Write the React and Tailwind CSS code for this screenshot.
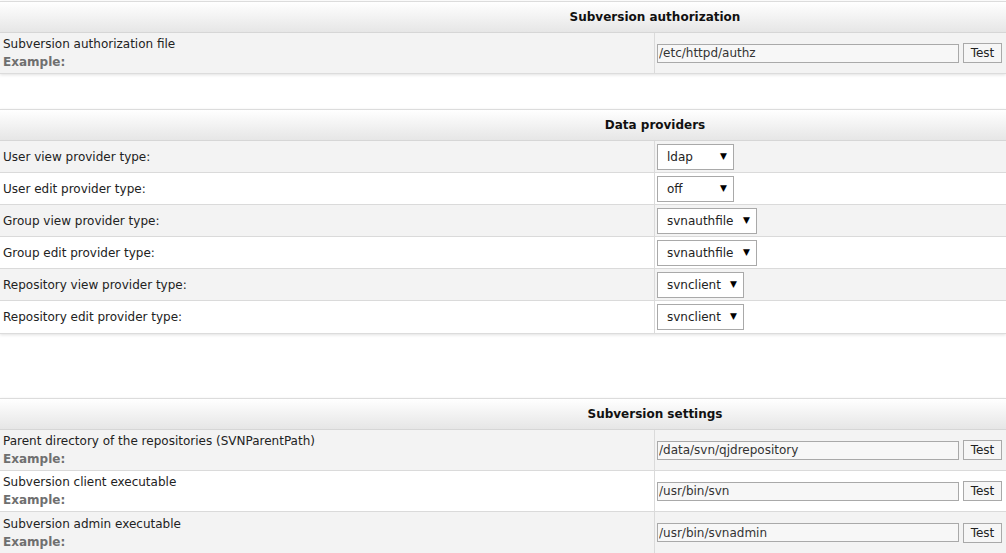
import { useState } from "react";

const font = "font-['Verdana','DejaVu_Sans',sans-serif]";

const Section = ({ title, children }) => (
  <section className="w-[1006px] border-t border-b border-[#dcdcdc] bg-white shadow-[0_1px_3px_rgba(0,0,0,0.12)]">
    <div className="flex h-[31px] items-center justify-center border-b border-[#d6d6d6] bg-gradient-to-b from-[#ffffff] to-[#e6e6e6] pl-[304px] text-[12px] font-bold text-[#111]">
      {title}
    </div>
    {children}
  </section>
);

const Row = ({ shaded, height, left, right, last }) => (
  <div
    className={`grid grid-cols-[654px_1fr] ${height} ${shaded ? "bg-[#f3f3f3]" : "bg-white"} ${
      last ? "" : "border-b border-[#dadada]"
    }`}
  >
    <div className="flex flex-col justify-center pl-[3px] text-[12px] leading-[18px] text-[#222]">{left}</div>
    <div className="flex items-center border-l border-[#dadada] pl-[2px]">{right}</div>
  </div>
);

const Label = ({ text }) => (
  <>
    <span>{text}</span>
    <span className="font-bold text-[#6f6f6f]">Example:</span>
  </>
);

const PathInput = ({ value }) => {
  const [text, setText] = useState(value);
  return (
    <div className="flex items-center gap-[4px]">
      <input
        className="h-[19px] w-[302px] border border-[#a9a9a9] bg-[#f7f7f7] px-[1px] text-[12px] text-[#333] outline-none"
        value={text}
        onChange={(event) => setText(event.target.value)}
      />
      <button className="h-[20px] w-[39px] border border-[#a9a9a9] bg-[#f6f6f6] text-[12px] text-[#222]">Test</button>
    </div>
  );
};

const Select = ({ value, width }) => (
  <div
    className={`flex h-[26px] ${width} items-center justify-between border border-[#a9a9a9] bg-white pl-[9px] pr-[6px] text-[12px] text-[#222]`}
  >
    <span>{value}</span>
    <span className="text-[9px] text-black">▼</span>
  </div>
);

const providers = [
  ["User view provider type:", "ldap", "w-[77px]"],
  ["User edit provider type:", "off", "w-[77px]"],
  ["Group view provider type:", "svnauthfile", "w-[100px]"],
  ["Group edit provider type:", "svnauthfile", "w-[100px]"],
  ["Repository view provider type:", "svnclient", "w-[87px]"],
  ["Repository edit provider type:", "svnclient", "w-[87px]"]
];

const settings = [
  ["Parent directory of the repositories (SVNParentPath)", "/data/svn/qjdrepository"],
  ["Subversion client executable", "/usr/bin/svn"],
  ["Subversion admin executable", "/usr/bin/svnadmin"]
];

export default function App() {
  return (
    <div className={`h-[553px] w-[1006px] overflow-hidden bg-white pt-[1px] ${font}`}>
      <Section title="Subversion authorization">
        <Row
          shaded
          last
          height="h-[40px]"
          left={<Label text="Subversion authorization file" />}
          right={<PathInput value="/etc/httpd/authz" />}
        />
      </Section>

      <div className="h-[35px]" />

      <Section title="Data providers">
        {providers.map(([label, value, width], index) => (
          <Row
            key={label}
            shaded={index % 2 === 0}
            last={index === providers.length - 1}
            height="h-[32px]"
            left={<span>{label}</span>}
            right={<Select value={value} width={width} />}
          />
        ))}
      </Section>

      <div className="h-[64px]" />

      <Section title="Subversion settings">
        {settings.map(([label, value], index) => (
          <Row
            key={label}
            shaded={index % 2 === 0}
            last={index === settings.length - 1}
            height="h-[41px]"
            left={<Label text={label} />}
            right={<PathInput value={value} />}
          />
        ))}
      </Section>
    </div>
  );
}
